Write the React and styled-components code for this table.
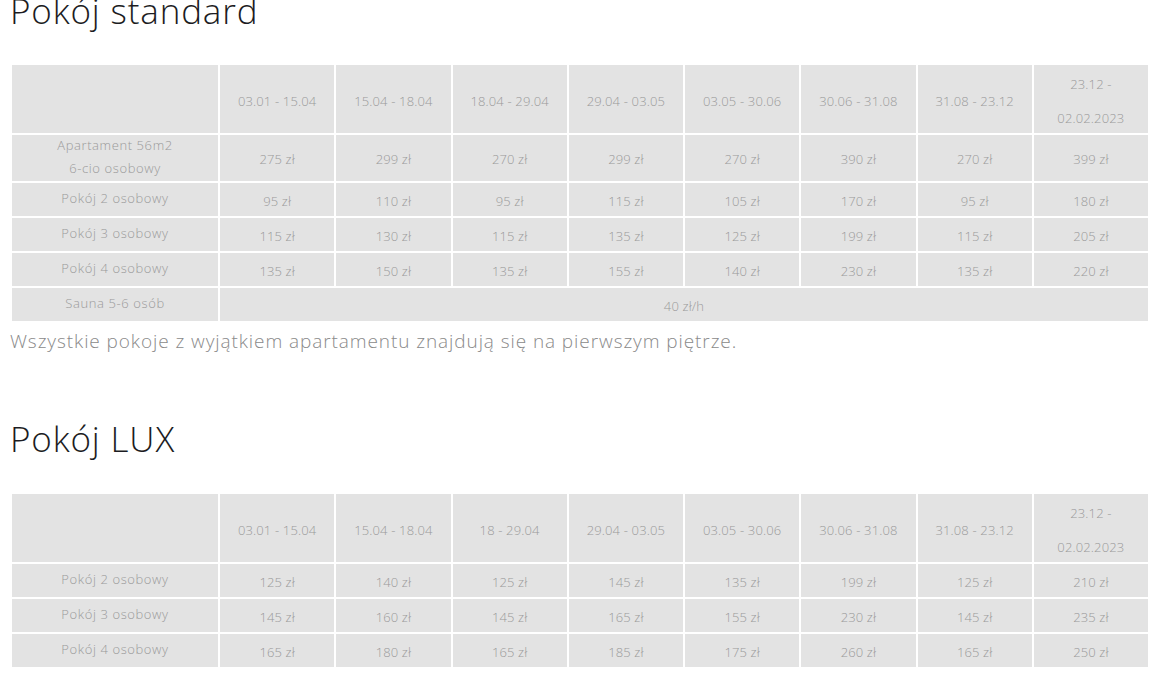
import React from "react";
import styled, { createGlobalStyle } from "styled-components";

const Global = createGlobalStyle`
  html, body { margin: 0; padding: 0; background: #fff; }
  body { font-family: "Open Sans", "Liberation Sans", sans-serif; overflow: hidden; }
`;

const Page = styled.div`
  padding-left: 10px;
  width: 1140px;
`;

const Title = styled.h2`
  margin: ${(p) => p.$mt}px 0 0 0;
  font-size: 35px;
  line-height: 42px;
  font-weight: 300;
  color: #1c1c22;
  letter-spacing: 0.85px;
`;

const Table = styled.table`
  width: 1140px;
  margin-top: ${(p) => p.$mt}px;
  border-collapse: separate;
  border-spacing: 2px;
  table-layout: fixed;
  margin-left: 0;
  margin-right: 0;
`;

const Cell = styled.td`
  background: #e3e3e3;
  color: #9a9a9a;
  font-size: 13px;
  font-weight: 300;
  text-align: center;
  vertical-align: middle;
  padding: 0 4px;
  height: ${(p) => p.$h}px;
  line-height: ${(p) => p.$lh}px;
  letter-spacing: ${(p) => (p.$label ? "0.6px" : "0.15px")};
`;

const Label = styled.span`
  display: block;
  position: relative;
  top: ${(p) => p.$shift || 0}px;
`;

const Note = styled.p`
  margin: 4px 0 0 0;
  font-size: 19px;
  line-height: 28px;
  font-weight: 300;
  color: #8a8a8a;
  letter-spacing: 0.92px;
`;

const stdHeaders = [
  "03.01 - 15.04",
  "15.04 - 18.04",
  "18.04 - 29.04",
  "29.04 - 03.05",
  "03.05 - 30.06",
  "30.06 - 31.08",
  "31.08 - 23.12",
];
const luxHeaders = [
  "03.01 - 15.04",
  "15.04 - 18.04",
  "18 - 29.04",
  "29.04 - 03.05",
  "03.05 - 30.06",
  "30.06 - 31.08",
  "31.08 - 23.12",
];

const stdRows = [
  { label: ["Apartament 56m2", "6-cio osobowy"], prices: [275, 299, 270, 299, 270, 390, 270, 399] },
  { label: ["Pokój 2 osobowy"], prices: [95, 110, 95, 115, 105, 170, 95, 180] },
  { label: ["Pokój 3 osobowy"], prices: [115, 130, 115, 135, 125, 199, 115, 205] },
  { label: ["Pokój 4 osobowy"], prices: [135, 150, 135, 155, 140, 230, 135, 220] },
];
const luxRows = [
  { label: ["Pokój 2 osobowy"], prices: [125, 140, 125, 145, 135, 199, 125, 210] },
  { label: ["Pokój 3 osobowy"], prices: [145, 160, 145, 165, 155, 230, 145, 235] },
  { label: ["Pokój 4 osobowy"], prices: [165, 180, 165, 185, 175, 260, 165, 250] },
];

function Colgroup() {
  return (
    <colgroup>
      <col style={{ width: 206 }} />
      {Array.from({ length: 8 }).map((_, i) => (
        <col key={i} />
      ))}
    </colgroup>
  );
}

function HeaderRow({ headers }) {
  return (
    <tr>
      <Cell $h={66} $lh={34} />
      {headers.map((h) => (
        <Cell key={h} $h={66} $lh={34}>
          <Label $shift={2}>{h}</Label>
        </Cell>
      ))}
      <Cell $h={66} $lh={34}>
        <Label $shift={2}>
          23.12 -<br />
          02.02.2023
        </Label>
      </Cell>
    </tr>
  );
}

function PriceRow({ row }) {
  const multi = row.label.length > 1;
  const h = multi ? 46 : 33;
  const lh = multi ? 23 : 20;
  return (
    <tr>
      <Cell $h={h} $lh={lh} $label>
        <Label $shift={multi ? -1 : -2}>
          {row.label.map((l, i) => (
            <React.Fragment key={i}>
              {i > 0 && <br />}
              {l}
            </React.Fragment>
          ))}
        </Label>
      </Cell>
      {row.prices.map((p, i) => (
        <Cell key={i} $h={h} $lh={lh}>
          <Label $shift={1}>{p} zł</Label>
        </Cell>
      ))}
    </tr>
  );
}

export default function App() {
  return (
    <>
      <Global />
      <Page>
        <Title $mt={-10}>Pokój standard</Title>
        <Table $mt={31}>
          <Colgroup />
          <tbody>
            <HeaderRow headers={stdHeaders} />
            {stdRows.map((r, i) => (
              <PriceRow key={i} row={r} />
            ))}
            <tr>
              <Cell $h={33} $lh={20} $label>
                <Label $shift={-2}>Sauna 5-6 osób</Label>
              </Cell>
              <Cell colSpan={8} $h={33} $lh={20}>
                <Label $shift={1}>40 zł/h</Label>
              </Cell>
            </tr>
          </tbody>
        </Table>
        <Note>Wszystkie pokoje z wyjątkiem apartamentu znajdują się na pierwszym piętrze.</Note>
        <Title $mt={63}>Pokój LUX</Title>
        <Table $mt={32}>
          <Colgroup />
          <tbody>
            <HeaderRow headers={luxHeaders} />
            {luxRows.map((r, i) => (
              <PriceRow key={i} row={r} />
            ))}
          </tbody>
        </Table>
      </Page>
    </>
  );
}
